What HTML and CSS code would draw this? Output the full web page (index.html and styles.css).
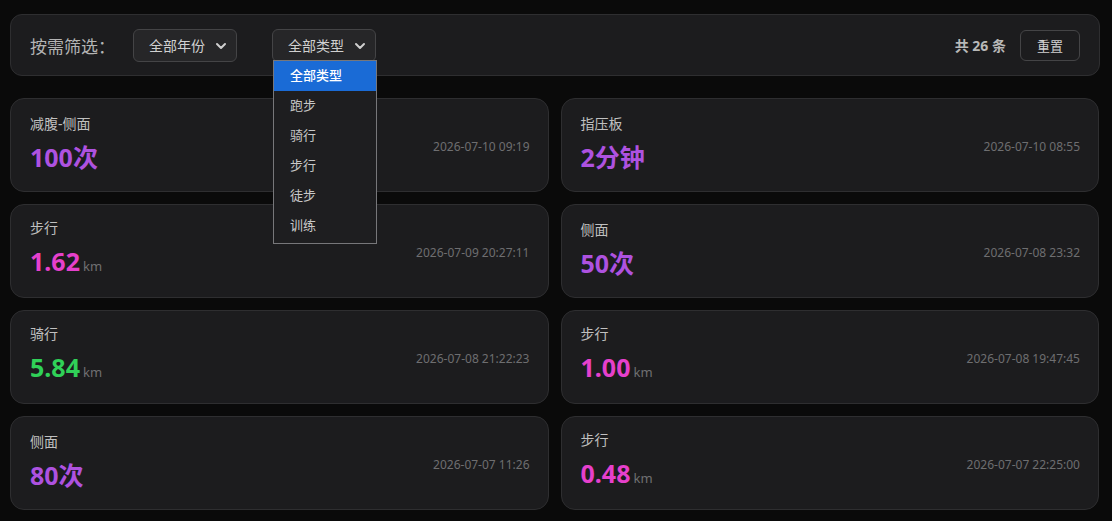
FILE: index.html
```html
<!DOCTYPE html>
<html lang="zh">
<head>
<meta charset="utf-8">
<link rel="stylesheet" href="styles.css">
</head>
<body>
<div class="page">
  <div class="filter-bar">
    <span class="filter-label">按需筛选：</span>
    <div class="select year">
      <span>全部年份</span>
      <svg class="chev" width="12" height="8" viewBox="0 0 12 8"><path d="M2 2 L6 6 L10 2" fill="none" stroke="#cfcfcf" stroke-width="2" stroke-linecap="round" stroke-linejoin="round"/></svg>
    </div>
    <div class="select type">
      <span>全部类型</span>
      <svg class="chev" width="12" height="8" viewBox="0 0 12 8"><path d="M2 2 L6 6 L10 2" fill="none" stroke="#cfcfcf" stroke-width="2" stroke-linecap="round" stroke-linejoin="round"/></svg>
      <ul class="dropdown">
        <li class="active">全部类型</li>
        <li>跑步</li>
        <li>骑行</li>
        <li>步行</li>
        <li>徒步</li>
        <li>训练</li>
      </ul>
    </div>
    <div class="spacer"></div>
    <span class="count">共 26 条</span>
    <button class="reset">重置</button>
  </div>

  <div class="grid">
    <div class="card">
      <div class="info"><div class="name">减腹-侧面</div><div class="value purple">100次</div></div>
      <div class="date">2026-07-10 09:19</div>
    </div>
    <div class="card">
      <div class="info"><div class="name">指压板</div><div class="value purple">2分钟</div></div>
      <div class="date">2026-07-10 08:55</div>
    </div>
    <div class="card">
      <div class="info"><div class="name">步行</div><div class="value pink">1.62<span class="unit">km</span></div></div>
      <div class="date">2026-07-09 20:27:11</div>
    </div>
    <div class="card">
      <div class="info"><div class="name">侧面</div><div class="value purple">50次</div></div>
      <div class="date">2026-07-08 23:32</div>
    </div>
    <div class="card">
      <div class="info"><div class="name">骑行</div><div class="value green">5.84<span class="unit">km</span></div></div>
      <div class="date">2026-07-08 21:22:23</div>
    </div>
    <div class="card">
      <div class="info"><div class="name">步行</div><div class="value pink">1.00<span class="unit">km</span></div></div>
      <div class="date">2026-07-08 19:47:45</div>
    </div>
    <div class="card">
      <div class="info"><div class="name">侧面</div><div class="value purple">80次</div></div>
      <div class="date">2026-07-07 11:26</div>
    </div>
    <div class="card">
      <div class="info"><div class="name">步行</div><div class="value pink">0.48<span class="unit">km</span></div></div>
      <div class="date">2026-07-07 22:25:00</div>
    </div>
  </div>
</div>
</body>
</html>
```
FILE: styles.css
```css
* { box-sizing: border-box; }
html, body {
  margin: 0;
  background: #0a0a0a;
  font-family: "Noto Sans", "Noto Sans CJK SC", sans-serif;
  color: #c8c8c8;
}
.page {
  padding: 14px 12px 10px 10px;
}
.filter-bar {
  display: flex;
  align-items: center;
  height: 62px;
  padding: 0 20px 0 19px;
  background: #1c1c1e;
  border: 1px solid #2e2e30;
  border-radius: 12px;
}
.filter-label {
  font-size: 17px;
  color: #b4b4b4;
  margin-right: 18px;
}
.select {
  position: relative;
  display: flex;
  align-items: center;
  justify-content: space-between;
  width: 104px;
  height: 33px;
  padding: 0 9px 0 15px;
  background: #262628;
  border: 1px solid #444446;
  border-radius: 6px;
  font-size: 14px;
  color: #d0d0d0;
}
.select.type { margin-left: 35px; }
.chev { margin-top: 1px; }
.dropdown {
  position: absolute;
  left: 0;
  top: 30px;
  width: 104px;
  margin: 0;
  padding: 0 0 1px 0;
  list-style: none;
  background: #1e1e20;
  border: 1px solid #77777a;
  z-index: 5;
}
.dropdown li {
  height: 30.2px;
  line-height: 29px;
  padding-left: 16px;
  font-size: 13px;
  color: #c8c8c8;
}
.dropdown li.active {
  background: #1a6bd6;
  color: #ffffff;
  font-weight: 500;
}
.spacer { flex: 1; }
.count {
  font-size: 14px;
  font-weight: 700;
  color: #b8b8b8;
  margin-right: 14px;
}
.reset {
  width: 60px;
  height: 31px;
  margin-right: -1px;
  background: transparent;
  border: 1px solid #444446;
  border-radius: 6px;
  font-family: inherit;
  font-size: 13px;
  color: #d0d0d0;
  padding: 0;
}
.grid {
  display: grid;
  grid-template-columns: 1fr 1fr;
  gap: 12px;
  margin-top: 22px;
  margin-right: 1px;
}
.card {
  display: flex;
  align-items: center;
  justify-content: space-between;
  height: 94px;
  padding: 17px 18px 17px 19px;
  background: #1c1c1e;
  border: 1px solid #2e2e30;
  border-radius: 14px;
}
.info { margin-top: -2px; }
.name {
  font-size: 14px;
  line-height: 18px;
  color: #c0c0c0;
}
.value {
  margin-top: 8px;
  font-size: 25px;
  line-height: 32px;
  font-weight: 700;
}
.purple { color: #ae52e0; }
.pink { color: #e640cc; }
.green { color: #30d158; }
.unit {
  font-size: 13px;
  font-weight: 400;
  color: #707072;
  margin-left: 3px;
}
.date {
  font-size: 12px;
  color: #6e6e70;
  padding-top: 3px;
}
```
